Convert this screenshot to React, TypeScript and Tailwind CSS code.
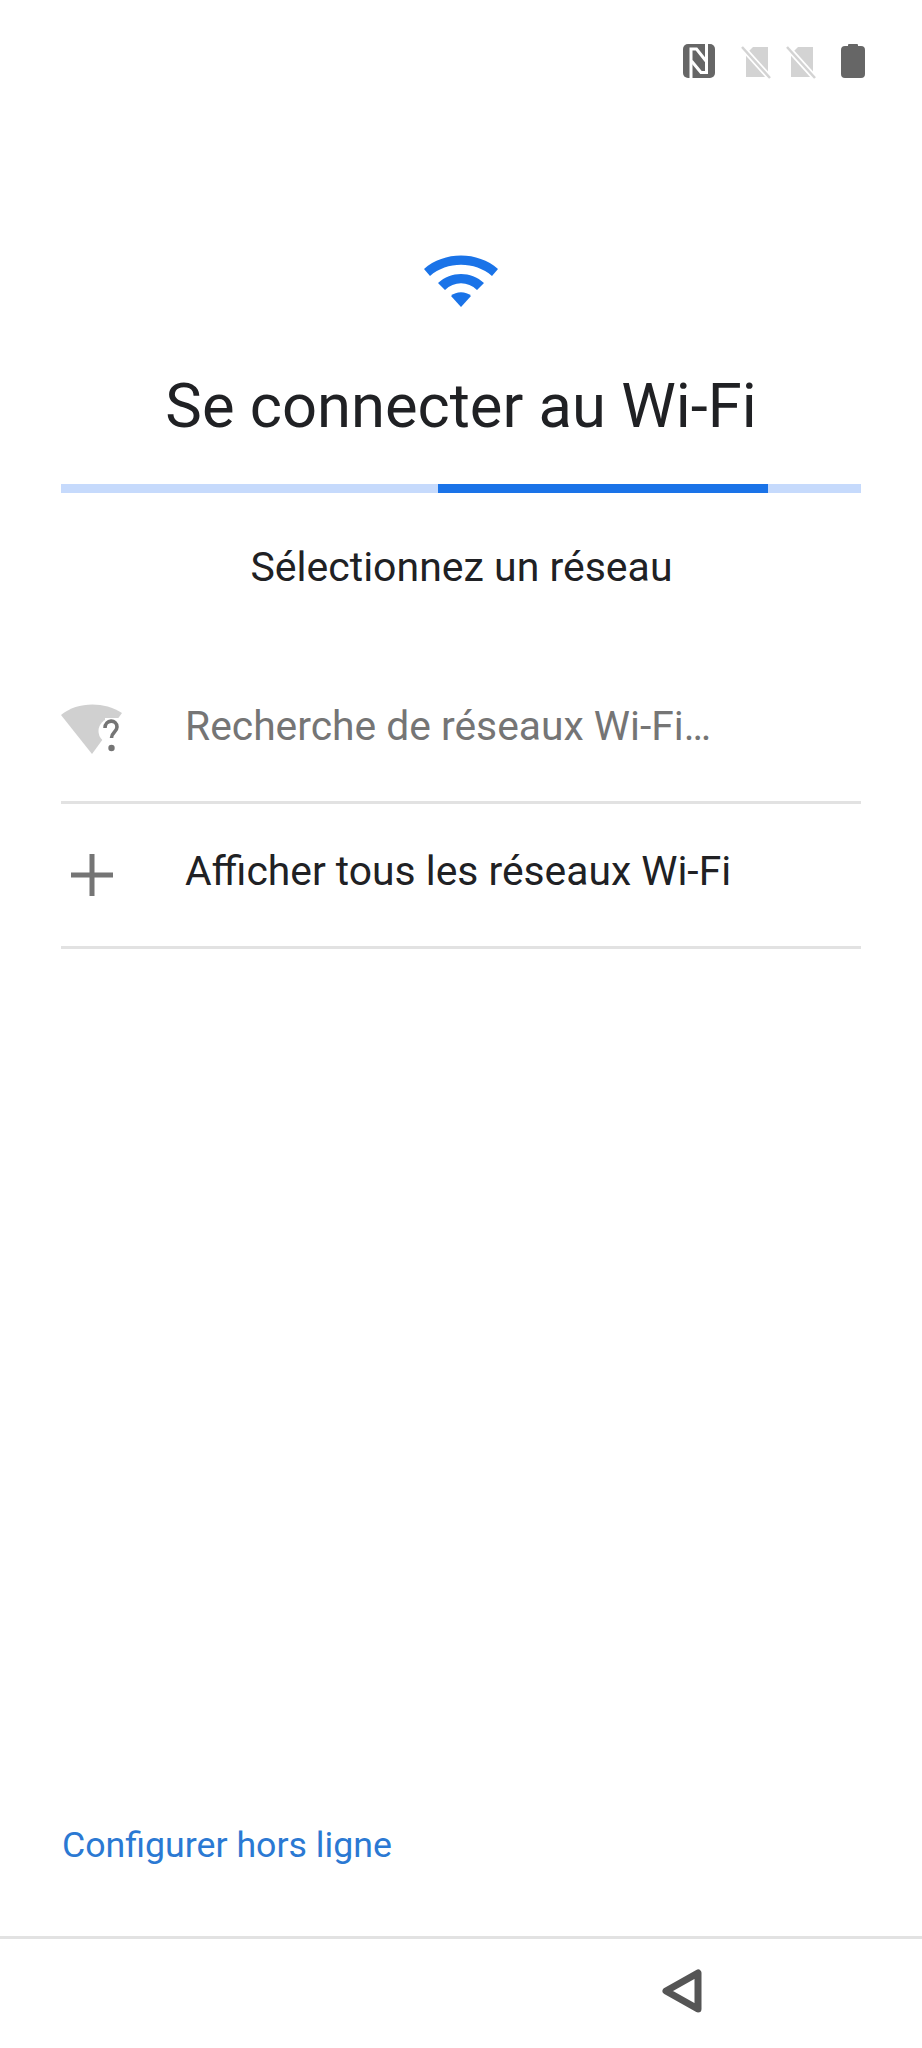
const font = "font-['Roboto',sans-serif]";

function NfcIcon() {
  return (
    <svg width="32" height="34" viewBox="0 0 32 34">
      <rect x="0" y="0" width="32" height="34" rx="5" fill="#666" />
      <path d="M8 34V5h5.500L23 17" fill="none" stroke="#fff" strokeWidth="3" />
      <path d="M23.500 0v28.500H18L8.500 17" fill="none" stroke="#fff" strokeWidth="3" />
    </svg>
  );
}

function SimOff() {
  return (
    <svg width="30" height="33" viewBox="0 0 30 33">
      <path d="M12 1h15v30H5V8z" fill="#d3d3d3" />
      <path d="M1 1l28 31" stroke="#fff" strokeWidth="6" />
      <path d="M1 1l28 31" stroke="#d3d3d3" strokeWidth="2.500" />
    </svg>
  );
}

function Battery() {
  return (
    <svg width="24" height="34" viewBox="0 2 24 34">
      <path d="M7 3a1 1 0 0 1 1-1h8a1 1 0 0 1 1 1v1h3a4 4 0 0 1 4 4v24a4 4 0 0 1-4 4H4a4 4 0 0 1-4-4V8a4 4 0 0 1 4-4h3z" fill="#666" />
    </svg>
  );
}

function WifiBlue() {
  return (
    <svg width="76" height="56" viewBox="0 0 76 56" fill="#1a73e8">
      <path d="M1 17C21 -1 55 -1 75 17L69 24C52 9 24 9 7 24Z" />
      <path d="M15 31C28 19 48 19 61 31L54 38C45 29 31 29 22 38Z" />
      <path d="M28 44C33 39 43 39 48 44L38 55Z" />
    </svg>
  );
}

function WifiUnknown() {
  return (
    <svg width="62" height="52" viewBox="0 0 62 52">
      <path d="M0 11C16 -2 42 -3 61 9L31 50Z" fill="#d0d0d0" />
      <circle cx="50" cy="27" r="12.500" fill="#fff" />
      <rect x="44" y="14" width="22" height="38" fill="#fff" />
      <path d="M44 24c0-9 12-9 12-1 0 5-5.500 5-5.500 11" fill="none" stroke="#757575" strokeWidth="3.600" />
      <circle cx="50.500" cy="44" r="3.200" fill="#757575" />
    </svg>
  );
}

function Row({ icon, children, muted }: { icon: React.ReactNode; children: React.ReactNode; muted?: boolean }) {
  return (
    <div className="flex h-[145px] items-center border-b-[3px] border-[#e2e2e2]">
      <div className="flex w-[124px] shrink-0 items-center">{icon}</div>
      <span className={muted ? "pb-[7px] text-[40.8px] text-[#757575]" : "pb-[7px] text-[40.8px] text-[#202124]"}>{children}</span>
    </div>
  );
}

export default function App() {
  return (
    <div className={`${font} flex h-[2048px] w-[922px] flex-col overflow-hidden bg-white`}>
      <div className="flex items-start justify-end pr-[57px] pt-[44px]">
        <div className="mr-[26px]"><NfcIcon /></div>
        <div className="mr-[15px] mt-[2px]"><SimOff /></div>
        <div className="mr-[25px] mt-[2px]"><SimOff /></div>
        <div><Battery /></div>
      </div>

      <div className="flex justify-center pt-[173px]"><WifiBlue /></div>
      <h1 className="mt-[64px] text-center text-[61.5px] leading-[68px] text-[#202124]">Se connecter au Wi-Fi</h1>

      <div className="mx-[61px] mt-[44px] flex h-[9px] bg-[#c6dafc]">
        <div className="ml-[377px] h-full w-[330px] bg-[#1a73e8]" />
      </div>

      <p className="ml-[1px] mt-[50px] text-center text-[41px] leading-[48px] text-[#202124]">Sélectionnez un réseau</p>

      <div className="mx-[61px] mt-[68px] flex flex-col">
        <Row icon={<WifiUnknown />} muted>Recherche de réseaux Wi-Fi…</Row>
        <Row
          icon={
            <svg width="42" height="42" viewBox="0 0 42 42" className="ml-[10px]" fill="#757575">
              <rect x="18.500" y="0" width="5" height="42" />
              <rect x="0" y="18.500" width="42" height="5" />
            </svg>
          }
        >
          Afficher tous les réseaux Wi-Fi
        </Row>
      </div>

      <div className="mt-auto px-[62px] pb-[70px]">
        <span className="text-[35.7px] leading-[42px] text-[#2b79d3]">Configurer hors ligne</span>
      </div>

      <div className="flex h-[112px] justify-end border-t-[3px] border-[#e2e2e2] pr-[220px] pt-[30px]">
        <svg width="40" height="44" viewBox="0 0 40 44" className="h-[44px]">
          <path d="M4 22L36 4V40Z" fill="none" stroke="#555" strokeWidth="7" strokeLinejoin="round" />
        </svg>
      </div>
    </div>
  );
}
